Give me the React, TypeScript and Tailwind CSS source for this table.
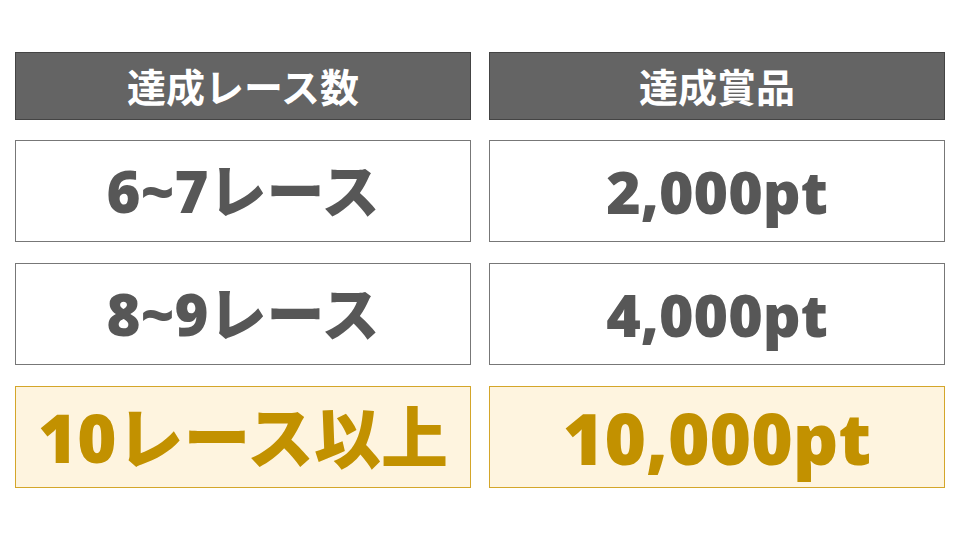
const rows = [
  { left: "6~7レース", right: "2,000pt", gold: false },
  { left: "8~9レース", right: "4,000pt", gold: false },
  { left: "10レース以上", right: "10,000pt", gold: true },
];

function Cell({ text, gold, wide }: { text: string; gold: boolean; wide?: boolean }) {
  const size = gold
    ? wide
      ? "text-[71px]"
      : "text-[67px]"
    : wide
      ? "text-[59px]"
      : "text-[58px]";
  return (
    <div
      className={`h-[102px] flex items-center justify-center border ${
        gold
          ? "bg-[#fef4df] border-[#d4a62a] text-[#c29100]"
          : "bg-white border-[#777777] text-[#575757]"
      } ${size} font-extrabold leading-none`}
    >
      {text}
    </div>
  );
}

export default function App() {
  return (
    <div
      className="w-[960px] h-[540px] bg-white px-[15px] pt-[52px]"
      style={{ fontFamily: '"Open Sans", "Noto Sans CJK JP", sans-serif' }}
    >
      <div className="grid grid-cols-[456px_456px] gap-x-[18px] gap-y-[21px]">
        <div className="h-[68px] -mb-px flex items-center justify-center bg-[#646464] border border-[#444444] text-white text-[39px] font-bold leading-none">
          達成レース数
        </div>
        <div className="h-[68px] -mb-px flex items-center justify-center bg-[#646464] border border-[#444444] text-white text-[39px] font-bold leading-none">
          達成賞品
        </div>
        {rows.map((r) => (
          <>
            <Cell key={r.left} text={r.left} gold={r.gold} />
            <Cell key={r.right} text={r.right} gold={r.gold} wide />
          </>
        ))}
      </div>
    </div>
  );
}
